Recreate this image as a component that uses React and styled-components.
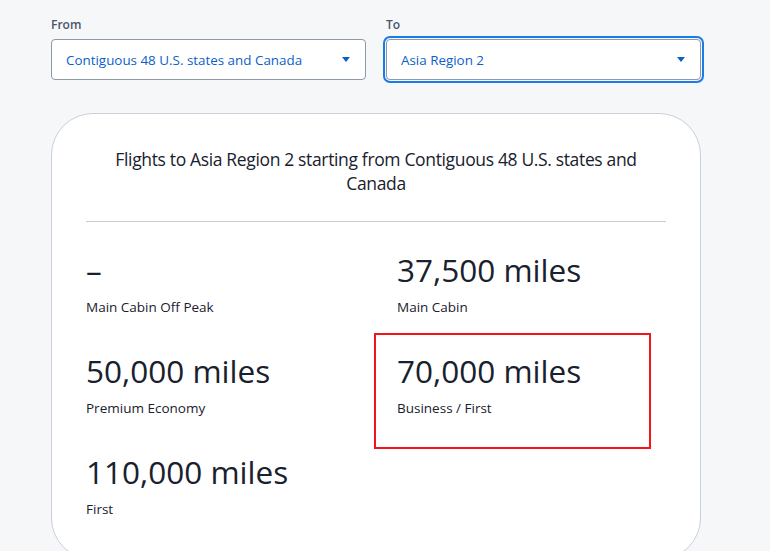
import React from 'react';
import styled, { createGlobalStyle } from 'styled-components';

const GlobalStyle = createGlobalStyle`
  body {
    margin: 0;
    background: #f6f7f9;
    font-family: 'Open Sans', 'Noto Sans', sans-serif;
    color: #18212d;
  }
`;

const App = () => (
  <>
    <GlobalStyle />
    <Page>
      <Pickers>
        <Field>
          <Label>From</Label>
          <Select>
            <SelectText>Contiguous 48 U.S. states and Canada</SelectText>
            <Caret />
          </Select>
        </Field>
        <Field>
          <Label>To</Label>
          <Select focused>
            <SelectText>Asia Region 2</SelectText>
            <Caret />
          </Select>
        </Field>
      </Pickers>

      <Card>
        <Title>
          Flights to Asia Region 2 starting from Contiguous 48 U.S. states and Canada
        </Title>
        <Divider />
        <Awards>
          {awards.map(({ value, label, highlighted }) => (
            <Award key={label} highlighted={highlighted}>
              <Miles>{value}</Miles>
              <Cabin>{label}</Cabin>
            </Award>
          ))}
        </Awards>
      </Card>
    </Page>
  </>
);

const awards = [
  { value: '–', label: 'Main Cabin Off Peak' },
  { value: '37,500 miles', label: 'Main Cabin' },
  { value: '50,000 miles', label: 'Premium Economy' },
  { value: '70,000 miles', label: 'Business / First', highlighted: true },
  { value: '110,000 miles', label: 'First' },
];

const Page = styled.div`
  width: 650px;
  padding: 17px 0 0 51px;
`;

const Pickers = styled.div`
  display: grid;
  grid-template-columns: 315px 315px;
  column-gap: 20px;
`;

const Field = styled.div`
  display: flex;
  flex-direction: column;
  gap: 6px;
`;

const Label = styled.span`
  font-size: 12px;
  line-height: 16px;
  font-weight: 600;
  color: #48566a;
`;

const Select = styled.div`
  height: 41px;
  box-sizing: border-box;
  display: flex;
  align-items: center;
  justify-content: space-between;
  padding: 0 15px 0 14px;
  background: #fff;
  border: 1px solid #8c99a8;
  border-radius: 4px;
  outline: ${({ focused }) => (focused ? '2px solid #1a7ae6' : 'none')};
  outline-offset: 1px;
`;

const SelectText = styled.span`
  font-size: 13.4px;
  color: #0c5fc9;
`;

const Caret = styled.span`
  width: 0;
  height: 0;
  border-left: 4px solid transparent;
  border-right: 4px solid transparent;
  border-top: 5px solid #0c5fc9;
`;

const Card = styled.div`
  margin-top: 33px;
  background: #fff;
  border: 1px solid #c9d0d9;
  border-radius: 42px;
  padding: 33px 34px 40px;
`;

const Title = styled.p`
  margin: 0 20px;
  text-align: center;
  font-size: 17.5px;
  line-height: 24px;
  font-stretch: 90%;
  letter-spacing: -0.35px;
  color: #18212d;
`;

const Divider = styled.hr`
  margin: 26px 0 30px;
  border: 0;
  border-top: 1px solid #c9cdd2;
`;

const Awards = styled.div`
  display: grid;
  grid-template-columns: 311px 1fr;
  row-gap: 36px;
`;

const Award = styled.div`
  position: relative;
  display: flex;
  flex-direction: column;
  gap: 9px;

  &::after {
    content: '';
    display: ${({ highlighted }) => (highlighted ? 'block' : 'none')};
    position: absolute;
    left: -23px;
    top: -20px;
    width: 277px;
    height: 116px;
    box-sizing: border-box;
    border: 2px solid #f2161b;
  }
`;

const Miles = styled.span`
  font-size: 31.5px;
  line-height: 36px;
  font-weight: 500;
  color: #18212d;
`;

const Cabin = styled.span`
  font-size: 13.5px;
  line-height: 20px;
  color: #18212d;
`;

export default App;
